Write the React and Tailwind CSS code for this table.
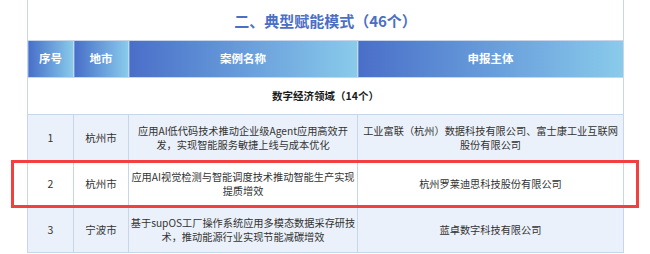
const rows = [
  {
    no: "1",
    city: "杭州市",
    name: ["应用AI低代码技术推动企业级Agent应用高效开", "发，实现智能服务敏捷上线与成本优化"],
    org: ["工业富联（杭州）数据科技有限公司、富士康工业互联网", "股份有限公司"],
    h: "h-[47px]",
    bg: "bg-[#ebf1fa]",
  },
  {
    no: "2",
    city: "杭州市",
    name: ["应用AI视觉检测与智能调度技术推动智能生产实现", "提质增效"],
    org: ["杭州罗莱迪思科技股份有限公司"],
    h: "h-[46px]",
    bg: "bg-white",
  },
  {
    no: "3",
    city: "宁波市",
    name: ["基于supOS工厂操作系统应用多模态数据采存研技", "术，推动能源行业实现节能减碳增效"],
    org: ["蓝卓数字科技有限公司"],
    h: "h-[45px]",
    bg: "bg-[#ebf1fa]",
  },
];

const Lines = ({ lines }) => (
  <>
    {lines.map((l, i) => (
      <div key={i} className="whitespace-nowrap">
        {l}
      </div>
    ))}
  </>
);

export default function App() {
  const head = "bg-linear-to-r from-[#4a6ec8] to-[#8acbeb] text-white font-bold text-[11.5px] border border-[#c8d6ec]";
  const cell = "border border-[#c8d6ec] text-center align-middle p-0";

  return (
    <div className="relative w-[650px] h-[254px] bg-white overflow-hidden font-['Noto_Sans_CJK_SC','Noto_Sans',sans-serif]">
      <table className="ml-[27px] w-[596px] table-fixed border-collapse">
        <colgroup>
          <col className="w-[46px]" />
          <col className="w-[55px]" />
          <col className="w-[229px]" />
          <col className="w-[266px]" />
        </colgroup>
        <tbody>
          <tr className="h-[40px]">
            <td colSpan={4} className="border-x border-[#c8d6ec] text-center align-middle">
              <span className="text-[15px] font-bold text-[#4b6fc3]">二、典型赋能模式（46个）</span>
            </td>
          </tr>
          <tr className="h-[37px]">
            <td className={`${head} text-center`}>序号</td>
            <td className={`${head} text-center`}>地市</td>
            <td className={`${head} text-center`}>案例名称</td>
            <td className={`${head} text-center`}>申报主体</td>
          </tr>
          <tr className="h-[37px]">
            <td colSpan={4} className={`${cell} bg-white text-[10.5px] font-bold text-[#1a1a1a]`}>
              数字经济领域（14个）
            </td>
          </tr>
          {rows.map((r) => (
            <tr key={r.no} className={`${r.h} ${r.bg}`}>
              <td className={`${cell} text-[10.5px] text-[#333]`}>{r.no}</td>
              <td className={`${cell} text-[10.5px] text-[#333]`}>{r.city}</td>
              <td className={`${cell} text-[10.2px] leading-[14px] text-[#333]`}>
                <Lines lines={r.name} />
              </td>
              <td className={`${cell} text-[10.2px] leading-[14px] text-[#333]`}>
                <Lines lines={r.org} />
              </td>
            </tr>
          ))}
        </tbody>
      </table>
      <div className="absolute left-[11px] top-[160px] w-[628px] h-[48px] border-[3px] border-[#f23f3f]" />
    </div>
  );
}
